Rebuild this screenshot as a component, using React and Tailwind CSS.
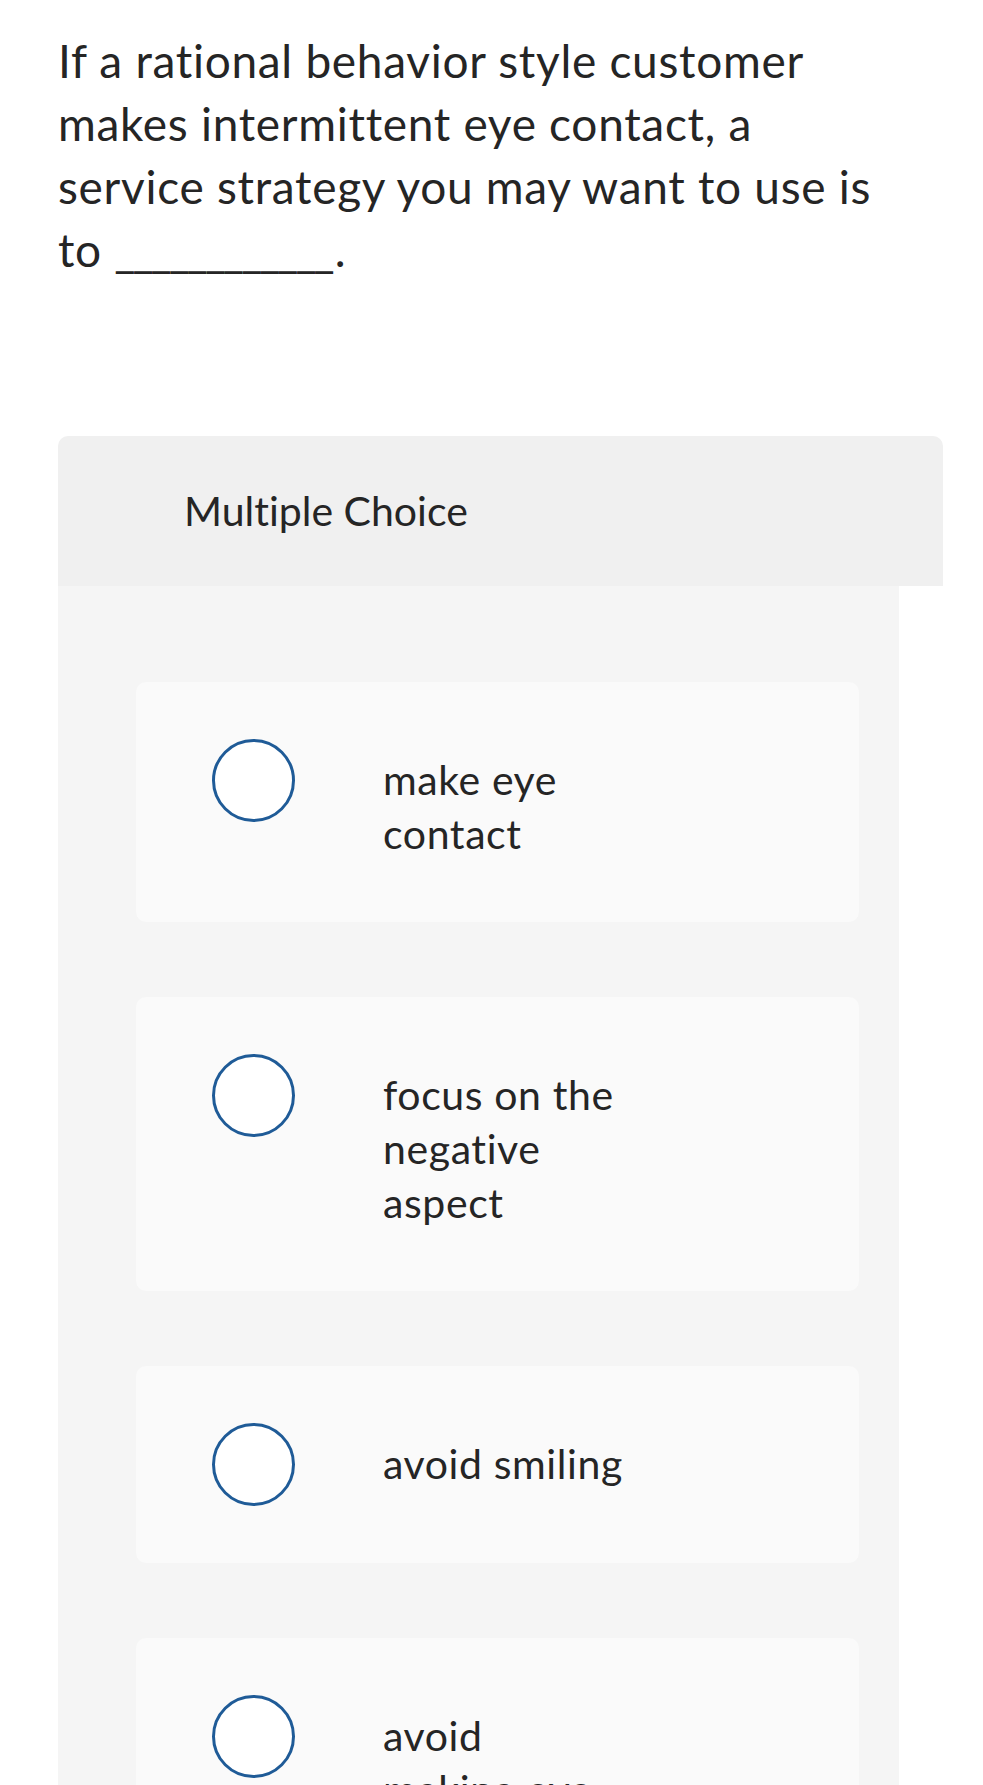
import React from "react";

const answers = [
  ["make eye", "contact"],
  ["focus on the", "negative", "aspect"],
  ["avoid smiling"],
  ["avoid", "making eye", "contact"],
];

function Choice({ lines }) {
  return (
    <div className="flex items-start gap-[88px] rounded-[10px] bg-[#fafafa] pl-[76px] pr-[40px] py-[57px]">
      <div className="h-[83px] w-[83px] shrink-0 rounded-full border-[3px] border-[#1f5b97] bg-white" />
      <div className="pt-[14px] pb-[4px] text-[41px] leading-[54px] tracking-[0.6px] text-[#252525] whitespace-nowrap">
        {lines.map((l, i) => (
          <div key={i}>{l}</div>
        ))}
      </div>
    </div>
  );
}

export default function App() {
  return (
    <div className="h-[1785px] w-[983px] overflow-hidden bg-white font-['Lato','Liberation_Sans',sans-serif] text-[#252525] [font-variant-ligatures:none]">
      <div className="px-[58px] pt-[29px]">
        <p className="text-[46px] leading-[63px] tracking-[0.7px]">
          If a rational behavior style customer
          <br />
          makes intermittent eye contact, a
          <br />
          service strategy you may want to use is
          <br />
          to <span className="tracking-[-3px]">____________</span>
          <span className="ml-[3px]">.</span>
        </p>
      </div>
      <div className="ml-[58px] mt-[155px] w-[885px]">
        <div className="flex h-[150px] items-center rounded-t-[10px] bg-[#f0f0f0] pl-[126px] text-[41px] text-[#252525]">
          Multiple Choice
        </div>
        <div className="flex w-[841px] flex-col gap-[75px] bg-[#f5f5f5] pb-[80px] pl-[78px] pr-[40px] pt-[96px]">
          {answers.map((a, i) => (
            <Choice key={i} lines={a} />
          ))}
        </div>
      </div>
    </div>
  );
}
